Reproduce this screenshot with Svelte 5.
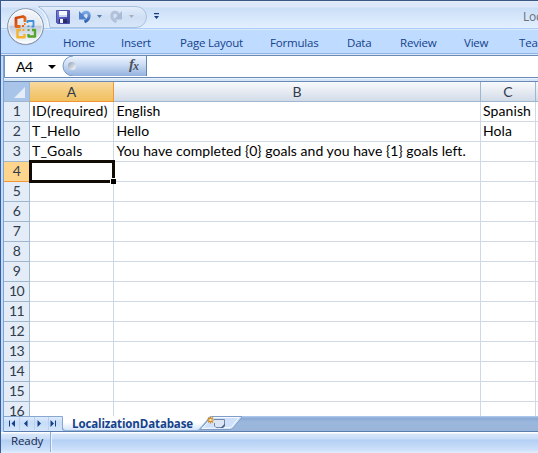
<script>
  const menus = [
    ['Home', 58], ['Insert', 59], ['Page Layout', 90], ['Formulas', 77],
    ['Data', 53], ['Review', 64], ['View', 55], ['Team', 40]
  ];
  const cells = {
    1: ['ID(required)', 'English', 'Spanish'],
    2: ['T_Hello', 'Hello', 'Hola'],
    3: ['T_Goals', 'You have completed {0} goals and you have {1} goals left.', '']
  };
  const rows = Array.from({ length: 16 }, (_, i) => i + 1);
</script>

<div class="window">
  <header class="title">
    <svg class="quick" width="170" height="27" viewBox="0 1 170 27">
      <defs>
        <linearGradient id="qa" x2="0" y2="1"><stop stop-color="#e3edfb" /><stop offset=".5" stop-color="#cfdff4" /><stop offset="1" stop-color="#d8e7fa" /></linearGradient>
        <linearGradient id="disk" x2="1" y2="1"><stop stop-color="#7d86de" /><stop offset="1" stop-color="#30349b" /></linearGradient>
        <linearGradient id="undo" x2="0" y2="1"><stop stop-color="#78a9e5" /><stop offset="1" stop-color="#315fae" /></linearGradient>
      </defs>
      <path d="M38 6.500H136a10.500 10.500 0 0 1 0 21H50Q49 12 38 6.500Z" fill="url(#qa)" />
      <path d="M38 6.500H136a10.500 10.500 0 0 1 0 21H50Q49 12 38 6.500" fill="none" stroke="#a9c0df" />
      <path d="M37 7.500Q47 12 48.500 27" fill="none" stroke="#f3f8ff" />
      <path d="M56.500 10.500h13v13h-12l-1-1z" fill="url(#disk)" stroke="#494fab" />
      <path d="M59 11h8v6h-8z" fill="#f6f8ff" /><path d="M59 15h8v2h-8z" fill="#c7d5f0" />
      <path d="M59 19h8v4h-8z" fill="#292d61" /><path d="M60 19h3v4h-3z" fill="#eef0fa" />
      <path d="M82 16C83 11.500 89 10.500 89.200 15.500c.100 3.500-1.800 5-4.700 6.300" fill="none" stroke="url(#undo)" stroke-width="3" />
      <path d="M79 11V19.500H87z" fill="#4f80cc" />
      <path d="M97 15h5l-2.500 3z" fill="#5378b1" />
      <path d="M119 16C118 11.500 112 10.500 111.800 15.500c-.100 3.500 1.800 5 4.700 6.300" fill="none" stroke="#b3c2d8" stroke-width="3" />
      <path d="M122 11V19.500H114z" fill="#a9bbd5" />
      <path d="M129 15h5l-2.500 3z" fill="#a7afba" />
      <path d="M154 13h5v1.300h-5zM154 16h5l-2.500 3z" fill="#173d7a" />
    </svg>
    <span class="caption">LocalizationDatabase</span>
  </header>
  <nav class="ribbon">
    {#each menus as [name, width]}<span style="width:{width}px">{name}</span>{/each}
  </nav>

  <svg class="office" width="42" height="42" viewBox="0 0 42 42">
    <defs>
      <linearGradient id="orb" x2="0" y2="1"><stop stop-color="#f5f7fa" /><stop offset=".46" stop-color="#e3e8f0" /><stop offset=".5" stop-color="#c3cddd" /><stop offset=".75" stop-color="#dfe6f0" /><stop offset="1" stop-color="#fff" /></linearGradient>
      <linearGradient id="or" x2="1" y2="1"><stop stop-color="#c93b09" /><stop offset="1" stop-color="#f28021" /></linearGradient>
    </defs>
    <circle cx="21.500" cy="22" r="18.300" fill="#8b9bb3" opacity=".5" />
    <circle cx="21.500" cy="21.500" r="17.800" fill="url(#orb)" stroke="#8291a8" />
    <circle cx="21.500" cy="21.500" r="16.700" fill="none" stroke="#fff" stroke-opacity=".8" />
    <g fill="none" stroke-linejoin="round">
      <path d="M16.500 21.500h-4.500v-8.500l7-1.500 2 1.200v4.300" stroke="url(#or)" stroke-width="2.800" />
      <path d="M23.500 18v-2h6v5.500h-2" stroke="#3f93dc" stroke-width="1.800" />
      <path d="M17 25h-3.500v7.300h7v-3.300" stroke="#f5b22c" stroke-width="2.400" />
      <path d="M28 25h3v6.500h-6.500v-2.500" stroke="#55a52b" stroke-width="2.400" />
    </g>
    <path d="M18 20h2v2h-2z" fill="#e76520" /><path d="M20 18h1.500v2H20z" fill="#ee7b20" />
    <path d="M23.500 20.500h2v1.500h-2z" fill="#3c94d9" /><path d="M18.500 24h2v2h-2z" fill="#f3a726" /><path d="M23.500 24h2v2h-2z" fill="#6ba632" />
  </svg>

  <main>
    <div class="formula">
      <div class="name"><span>A4</span><i></i></div>
      <div class="fx">
        <svg width="85" height="20" viewBox="0 0 85 20">
          <defs><linearGradient id="pill" x2="0" y2="1"><stop stop-color="#eef5ff" /><stop offset=".45" stop-color="#cadbf3" /><stop offset="1" stop-color="#93b1df" /></linearGradient>
          <linearGradient id="knob" x2="1" y2="1"><stop stop-color="#8e9db5" /><stop offset="1" stop-color="#fff" /></linearGradient></defs>
          <path d="M84 0H11a10 10 0 0 0 0 20h73z" fill="url(#pill)" />
          <path d="M11 0a10 10 0 0 0 0 20" fill="none" stroke="#7398c6" />
          <circle cx="10" cy="10" r="4" fill="url(#knob)" />
          <path d="M84.500 0v20" stroke="#5f87b5" />
        </svg>
        <em>f<small>x</small></em>
      </div>
    </div>
    <div class="gap"></div>
    <div class="sheet">
      <div class="row head">
        <div class="num"><svg width="25" height="19"><path d="M21 5v11H10z" fill="#e4edf8" /></svg></div>
        <div class="a active">A</div><div class="b">B</div><div class="c">C</div><div class="d"></div>
      </div>
      {#each rows as n}
        <div class="row">
          <div class="num" class:active={n === 4}>{n}</div>
          <div class="a">{cells[n]?.[0] ?? ''}{#if n === 4}<div class="cursor"><b></b></div>{/if}</div>
          <div class="b">{cells[n]?.[1] ?? ''}</div>
          <div class="c">{cells[n]?.[2] ?? ''}</div><div class="d"></div>
        </div>
      {/each}
    </div>
    <div class="tabs">
      <svg width="238" height="15" viewBox="0 0 238 15">
        <defs><linearGradient id="nav" x2="0" y2="1"><stop stop-color="#e2eefe" /><stop offset=".45" stop-color="#c6dcf8" /><stop offset="1" stop-color="#d4e5fb" /></linearGradient>
        <linearGradient id="tab" x2="0" y2="1"><stop stop-color="#fff" /><stop offset=".45" stop-color="#fff" /><stop offset="1" stop-color="#d4e5fa" /></linearGradient></defs>
        <path d="M0 0h59v15H0z" fill="url(#nav)" /><path d="M15.500 1v13M30.500 1v13M44.500 1v13" fill="none" stroke="#b9cfec" />
        <path d="M0 .5h58.500V14" fill="none" stroke="#85a7d2" />
        <path d="M5 4.500h1v6H5zM11 4v7L7.500 7.500zM23.500 4v7L20 7.500zM33.500 4v7L37 7.500zM46.500 4v7L50 7.500zM51 4.500h1v6H51z" fill="#173f87" />
        <path d="M59 0h147l-11 13q-1 1-3 1H62q-3 0-3-3z" fill="url(#tab)" />
        <path d="M196 13.500 207.500.500h31l-9 11q-2 2-4 2z" fill="#cfe1fa" stroke="#7f9dc6" />
        <path d="M198 12.500 208 1.500h27l-8 10z" fill="none" stroke="#f5faff" />
        <path d="M209.500 3.500h11v6l-2 2h-7l-2-1.500z" fill="#dce5f3" /><path d="M210 3.500h10.500v6l-2.500 2h-6l-1.500-1.500V7" fill="none" stroke="#7588aa" /><path d="M216.500 12l4.500-4.500V10l-2 2z" fill="#4f648b" />
        <path d="M206.500.500v7M203 4h7M204 1.500l5 5M209 1.500l-5 5" stroke="#d58b22" stroke-width="1.200" /><path d="M205.500 3h2v2h-2z" fill="#fff4c6" />
      </svg>
      <strong>LocalizationDatabase</strong>
    </div>
  </main>
  <footer><span>Ready</span><i></i></footer>
</div>

<style>
  :global(body) { margin: 0; overflow: hidden; }
  .window { position: relative; width: 538px; height: 453px; overflow: hidden; box-sizing: border-box; background: #bfdbff; border-top: 1px solid #3a5785; display: flex; flex-direction: column; font-family: "Open Sans", sans-serif; }
  .window::before { content: ''; position: absolute; z-index: 2; left: 0; top: 0; bottom: 0; width: 1px; background: #3a5b93; }
  .title { height: 27px; flex: none; display: flex; box-sizing: border-box; background: linear-gradient(#e3ebfa 0 1px, #dce7fa 2px 6px, #cadef6 7px, #d6e7fb 16px, #e2efff 27px); }
  .quick { display: block; flex: none; }
  .caption { margin-left: 353px; font-size: 12px; line-height: 16px; padding-top: 8px; color: #696e7a; letter-spacing: -.3px; }
  .ribbon { height: 28px; flex: none; box-sizing: border-box; display: flex; padding-left: 63px; border-top: 1px solid #a9cdf7; box-shadow: inset 0 1px #d9eaff, inset 0 -1px #6a8ab5, inset 0 -2px #dbe9fb, inset 0 -3px #8fb3e3; color: #15428b; font-size: 11.500px; line-height: 25px; white-space: nowrap; letter-spacing: -.2px; }
  .ribbon span { flex: none; padding-top: 1px; box-sizing: border-box; height: 26px; }
  .office { position: absolute; left: 4px; top: 4px; z-index: 3; }
  main { flex: none; margin-left: 4px; box-shadow: -1px 0 #7fa5d5; }
  .formula { height: 22px; box-sizing: border-box; display: flex; background: #fff; border-bottom: 1px solid #6a8ab5; border-left: 1px solid #7597c4; }
  .name { width: 57px; display: flex; align-items: center; font: 14px Lato, sans-serif; color: #000; }
  .name span { width: 32px; padding-left: 11px; letter-spacing: -.6px; }
  .name i { border: 4px solid transparent; border-top-color: #000; border-bottom: 0; margin-right: 2px; }
  .fx { width: 85px; position: relative; }
  .fx svg { display: block; }
  .fx em { position: absolute; left: 67px; top: 0; font: italic bold 15px/17px "Liberation Serif", serif; color: #4b5361; }
  .fx small { font-size: 12px; position: relative; top: 1px; left: -1px; }
  .gap { height: 4px; box-sizing: border-box; background: #d5e5f8; border-top: 1px solid #eaf3ff; border-bottom: 1px solid #6a8ab5; }
  .sheet { height: 334px; overflow: hidden; background: #fff; font: 14px Lato, sans-serif; }
  .row { display: flex; height: 20px; }
  .row > div { box-sizing: border-box; border-right: 1px solid #d0d7e5; border-bottom: 1px solid #d0d7e5; flex: none; white-space: nowrap; line-height: 18px; position: relative; color: #000; padding-left: 2px; }
  .row > .num { width: 26px; background: #e4ecf7; border-color: #9eb6ce; text-align: center; color: #303c4c; padding: 0; letter-spacing: -.7px; }
  .row > .num.active { background: #ffd58d; border-color: #f29536; }
  .row > .a { width: 84px; letter-spacing: .2px; } .row > .b { width: 367px; padding-left: 2.500px; letter-spacing: .05px; } .row > .c { width: 55px; letter-spacing: .1px; } .row > .d { width: 2px; padding: 0; border-right: 0; }
  .head > div { text-align: center; background: linear-gradient(#f8fafc, #e6ebf2 50%, #d2dbe9); border-color: #9eb6ce !important; color: #303c4c !important; padding: 0 !important; line-height: 20px !important; }
  .head > .num { background: #a9c4e9; }
  .head > .active { background: linear-gradient(#f9d99f, #f4cb7c 50%, #f1c15f); border-color: #f29536 !important; }
  .head svg { display: block; }
  .cursor { position: absolute; left: -1px; top: -2px; width: 86px; height: 23px; box-sizing: border-box; border: 3px solid #110b06; z-index: 1; }
  .cursor b { position: absolute; right: -4px; bottom: -4px; width: 5px; height: 5px; background: #000; border: 1px solid #fff; border-right: 0; border-bottom: 0; }
  .tabs { position: relative; height: 16px; box-sizing: border-box; background: linear-gradient(#aac5ea 0 1px, #89a8d5 2px, #9bb7dd 6px, #9bb5d9); border-bottom: 1px solid #587db0; }
  .tabs svg { display: block; }
  .tabs strong { position: absolute; left: 68px; top: 0; font: bold 11.500px/15px "Open Sans", sans-serif; color: #15428b; letter-spacing: -.12px; }
  footer { height: 22px; flex: none; box-sizing: border-box; display: flex; background: linear-gradient(#fff 0 1px, #d7e6fa 2px, #c7dcf8 7px, #b3cff4 8px, #cde1fa 18px, #deebfc 20px); border-bottom: 1px solid #36567f; color: #15284b; font-size: 11.500px; line-height: 18px; letter-spacing: -.1px; }
  footer span { margin-left: 11px; width: 39px; }
  footer i { width: 1px; height: 20px; background: #8eafd9; box-shadow: 1px 0 #edf5ff; }
</style>
